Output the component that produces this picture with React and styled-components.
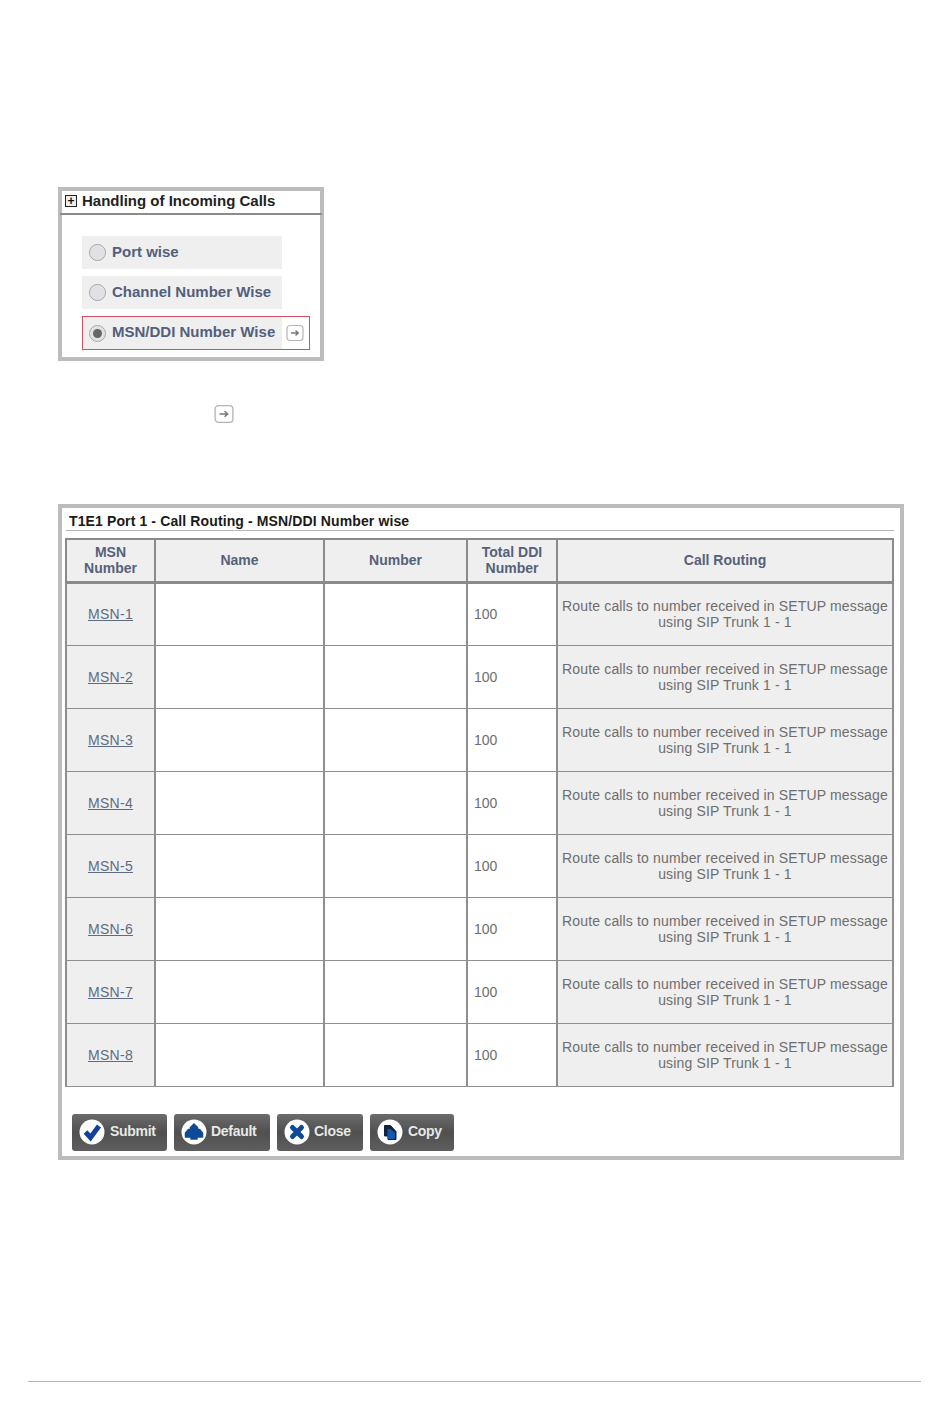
import React from "react";
import styled, { createGlobalStyle } from "styled-components";

const GlobalStyle = createGlobalStyle`
  html, body { margin: 0; padding: 0; background: #fff; }
  body { font-family: "Liberation Sans", Arial, sans-serif; }
`;

const Page = styled.div`
  width: 950px;
  height: 1409px;
  box-sizing: border-box;
  padding: 187px 46px 0 58px;
  display: flex;
  flex-direction: column;
`;

const SmallPanel = styled.section`
  width: 266px;
  height: 174px;
  box-sizing: border-box;
  border: 4px solid #bcbcbc;
`;

const PanelHead = styled.div`
  display: flex;
  align-items: center;
  gap: 5px;
  padding-left: 3px;
  padding-bottom: 3px;
  height: 19px;
  border-bottom: 2px solid #8c8c8c;
  margin: 0 -2px;
  font-size: 15px;
  font-weight: bold;
  color: #222;
`;

const PlusBox = styled.span`
  width: 10px;
  height: 10px;
  margin-left: 2px;
  border: 1px solid #222;
  background: #eee;
  display: flex;
  align-items: center;
  justify-content: center;
  font-size: 12px;
  line-height: 10px;
  font-weight: bold;
  color: #111;
`;

const Options = styled.div`
  padding: 21px 0 0 20px;
  display: flex;
  flex-direction: column;
  gap: 7px;
`;

const Option = styled.div`
  width: ${(p) => (p.$selected ? "228px" : "200px")};
  height: ${(p) => (p.$selected ? "34px" : "33px")};
  box-sizing: border-box;
  display: flex;
  align-items: center;
  border: ${(p) => (p.$selected ? "1px solid #d3505f" : "none")};
  background: ${(p) => (p.$selected ? "linear-gradient(90deg, #efefef 199px, #fff 199px)" : "#efefef")};
  padding-left: ${(p) => (p.$selected ? "6px" : "7px")};
`;

const Radio = styled.span`
  width: 17px;
  height: 17px;
  box-sizing: border-box;
  flex: none;
  border-radius: 50%;
  border: 1px solid #a5a5a5;
  background: #dfe1e5;
  box-shadow: inset 0 0 1px #fff;
  margin-right: 6px;
  display: flex;
  align-items: center;
  justify-content: center;
  &::after {
    content: "";
    display: ${(p) => (p.$checked ? "block" : "none")};
    width: 9px;
    height: 9px;
    border-radius: 50%;
    background: #666;
  }
`;

const OptionLabel = styled.span`
  font-size: 15px;
  font-weight: bold;
  color: #52607c;
  white-space: nowrap;
  margin-top: -3px;
`;

const ArrowBox = styled.span`
  display: inline-flex;
  flex: none;
  margin-left: 11px;
`;

const ArrowIcon = ({ size = 18 }) => (
  <svg width={size} height={size} viewBox="0 0 18 18">
    <rect x="1" y="1.500" width="16" height="15" rx="3" fill="#fff" stroke="#b5b5b5" strokeWidth="1.200" />
    <path d="M5 9h7M9.500 6.500 12.300 9l-2.800 2.500" fill="none" stroke="#777" strokeWidth="1.400" />
  </svg>
);

const LoneArrow = styled.div`
  margin: 43px 0 0 156px;
  height: 20px;
  display: flex;
`;

const BigPanel = styled.section`
  width: 846px;
  height: 656px;
  margin-top: 80px;
  box-sizing: border-box;
  border: 4px solid #bcbcbc;
  padding: 5px 7px 0 3px;
`;

const Title = styled.div`
  height: 18px;
  width: 828px;
  margin-left: 1px;
  padding-left: 3px;
  box-sizing: border-box;
  line-height: 17px;
  border-bottom: 1px solid #b5b5b5;
  font-size: 14px;
  letter-spacing: 0.12px;
  font-weight: bold;
  color: #1a1a1a;
  white-space: nowrap;
`;

const Table = styled.table`
  width: 827px;
  margin: 7px 0 0 0;
  border-collapse: collapse;
  table-layout: fixed;
`;

const Head = styled.th`
  height: 43px;
  padding: 0 0 1px;
  box-sizing: border-box;
  border: 2px solid #8a8a8a;
  border-bottom-width: 3px;
  background: #efefef;
  font-size: 14px;
  line-height: 16px;
  font-weight: bold;
  color: #56617a;
`;

const Row = styled.tr`
  height: 63px;
`;

const Cell = styled.td`
  padding: 0 ${(p) => (p.$pad ? "6px" : "0")};
  border: 1px solid #8f8f8f;
  border-left-width: 2px;
  border-right-width: 2px;
  background: ${(p) => (p.$shade ? "#efefef" : "#fff")};
  text-align: ${(p) => (p.$center ? "center" : "left")};
  font-size: 14px;
  line-height: 16px;
  letter-spacing: ${(p) => (p.$center ? "0.15px" : "0")};
  color: #6e6e6e;
`;

const MsnLink = styled.a`
  color: #5f6b82;
  text-decoration: underline;
  font-size: 14px;
  letter-spacing: 0.3px;
`;

const Buttons = styled.div`
  display: flex;
  gap: 7px;
  margin: 27px 0 0 7px;
`;

const Button = styled.button`
  width: ${(p) => p.$w}px;
  height: 37px;
  padding: 0 0 0 7px;
  display: flex;
  align-items: center;
  gap: ${(p) => p.$gap}px;
  border: none;
  border-radius: 3px;
  background: linear-gradient(#6b6b6b, #505050 50%, #5e5e5e);
  color: #e8e8e8;
  font: bold 14px "Liberation Sans", Arial, sans-serif;
  letter-spacing: -0.3px;
`;

const ButtonLabel = styled.span`
  margin-top: -3px;
`;

const Footer = styled.div`
  width: 893px;
  height: 1px;
  margin: 221px 0 0 -30px;
  background: #b4b4b4;
`;

const IconDisc = ({ children }) => (
  <svg width="26" height="26" viewBox="0 0 26 26">
    <circle cx="13" cy="13" r="12.500" fill="#fff" />
    {children}
  </svg>
);

const Check = () => (
  <IconDisc>
    <path d="M6.500 13 11.500 18.500 20 7" fill="none" stroke="#12409c" strokeWidth="5" />
  </IconDisc>
);

const Home = () => (
  <IconDisc>
    <path
      d="M13 5l3.500 3.500v2h2l3 3.500v4H16v2h-6v-2H4.500v-4l3-3.500h2v-2Z"
      fill="#0f4a96"
      stroke="#0f4a96"
      strokeWidth="1.500"
      strokeLinejoin="round"
    />
  </IconDisc>
);

const Cross = () => (
  <IconDisc>
    <path d="M8.500 8.500 17.500 17.500M17.500 8.500 8.500 17.500" stroke="#0f4a96" strokeWidth="5" strokeLinecap="round" />
  </IconDisc>
);

const Copy = () => (
  <IconDisc>
    <path d="M7.500 6.500h6l5.500 6v8H11v-3.500H7.500Z" fill="#10233f" stroke="#10233f" strokeWidth="1" />
    <path d="M10.500 10h3l4.500 4v6h-7.500Z" fill="#1557b0" />
  </IconDisc>
);

const options = [
  { label: "Port wise" },
  { label: "Channel Number Wise" },
  { label: "MSN/DDI Number Wise", selected: true },
];

const rows = [1, 2, 3, 4, 5, 6, 7, 8];

export default function App() {
  return (
    <Page>
      <GlobalStyle />
      <SmallPanel>
        <PanelHead>
          <PlusBox>+</PlusBox>
          Handling of Incoming Calls
        </PanelHead>
        <Options>
          {options.map((o) => (
            <Option key={o.label} $selected={o.selected}>
              <Radio $checked={o.selected} />
              <OptionLabel>{o.label}</OptionLabel>
              {o.selected && (
                <ArrowBox>
                  <ArrowIcon />
                </ArrowBox>
              )}
            </Option>
          ))}
        </Options>
      </SmallPanel>

      <LoneArrow>
        <ArrowIcon size={20} />
      </LoneArrow>

      <BigPanel>
        <Title>T1E1 Port 1 - Call Routing - MSN/DDI Number wise</Title>
        <Table>
          <colgroup>
            <col width="89" />
            <col width="169" />
            <col width="143" />
            <col width="90" />
            <col width="336" />
          </colgroup>
          <thead>
            <tr>
              <Head>MSN<br />Number</Head>
              <Head>Name</Head>
              <Head>Number</Head>
              <Head>Total DDI<br />Number</Head>
              <Head>Call Routing</Head>
            </tr>
          </thead>
          <tbody>
            {rows.map((n) => (
              <Row key={n}>
                <Cell $shade $center>
                  <MsnLink href="#">MSN-{n}</MsnLink>
                </Cell>
                <Cell />
                <Cell />
                <Cell $pad>100</Cell>
                <Cell $shade $center>
                  Route calls to number received in SETUP message<br />
                  using SIP Trunk 1 - 1
                </Cell>
              </Row>
            ))}
          </tbody>
        </Table>
        <Buttons>
          <Button $w={95} $gap={5}><Check /><ButtonLabel>Submit</ButtonLabel></Button>
          <Button $w={96} $gap={4}><Home /><ButtonLabel>Default</ButtonLabel></Button>
          <Button $w={86} $gap={4}><Cross /><ButtonLabel>Close</ButtonLabel></Button>
          <Button $w={84} $gap={5}><Copy /><ButtonLabel>Copy</ButtonLabel></Button>
        </Buttons>
      </BigPanel>

      <Footer />
    </Page>
  );
}
